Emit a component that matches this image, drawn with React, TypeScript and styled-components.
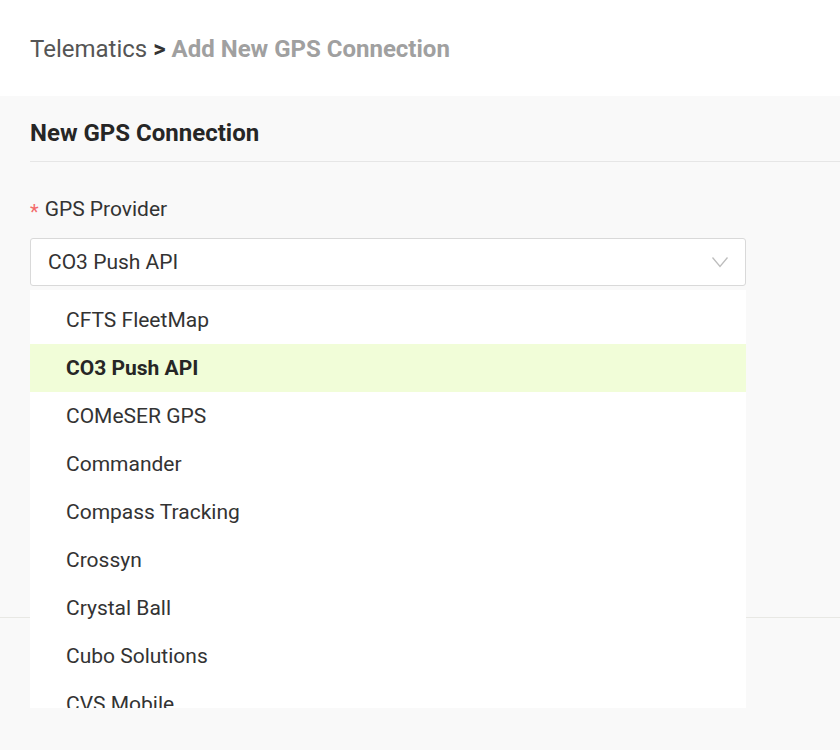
import styled, { createGlobalStyle } from "styled-components";

const providers = [
  "CFTS FleetMap",
  "CO3 Push API",
  "COMeSER GPS",
  "Commander",
  "Compass Tracking",
  "Crossyn",
  "Crystal Ball",
  "Cubo Solutions",
  "CVS Mobile",
];

const selected = "CO3 Push API";

export default function App() {
  return (
    <>
      <GlobalStyle />
      <Page>
        <Header>
          <Crumb>Telematics</Crumb>
          <Separator>&gt;</Separator>
          <CurrentCrumb>Add New GPS Connection</CurrentCrumb>
        </Header>
        <Panel>
          <TitleBar>
            <Title>New GPS Connection</Title>
          </TitleBar>
          <Form>
            <Label>
              <Required>*</Required>GPS Provider
            </Label>
            <SelectWrap>
              <SelectBox>
                <span>{selected}</span>
                <svg width="18" height="12" viewBox="0 0 18 12">
                  <path d="M1.5 1.5 L9 10.5 L16.5 1.5" fill="none" stroke="#bdbdbd" strokeWidth="1.3" />
                </svg>
              </SelectBox>
              <Menu>
                {providers.map((p) => (
                  <Option key={p} active={p === selected}>
                    {p}
                  </Option>
                ))}
              </Menu>
            </SelectWrap>
          </Form>
        </Panel>
      </Page>
    </>
  );
}

const GlobalStyle = createGlobalStyle`
  html, body {
    margin: 0;
    padding: 0;
    background: #f9f9f9;
  }

  body {
    font-family: Roboto, "Liberation Sans", sans-serif;
  }
`;

const Page = styled.div`
  min-height: 750px;
  background: #f9f9f9;
`;

const Header = styled.div`
  height: 96px;
  display: flex;
  align-items: center;
  gap: 6px;
  padding: 2px 0 0 30px;
  box-sizing: border-box;

  font-size: 24px;
  background: #ffffff;
`;

const Crumb = styled.span`
  color: #555555;
`;

const Separator = styled.span`
  font-weight: 700;
  color: #333333;
`;

const CurrentCrumb = styled.span`
  font-weight: 700;
  color: #a0a0a0;
`;

const Panel = styled.div`
  padding-left: 30px;
  background: #f9f9f9;
`;

const TitleBar = styled.div`
  height: 65px;
  display: flex;
  align-items: flex-end;

  border-bottom: 1px solid #e6e6e6;
`;

const Title = styled.h1`
  margin: 0 0 11px;

  font-size: 24px;
  font-weight: 700;
  line-height: 34px;
  color: #262626;
`;

const Form = styled.div`
  height: 456px;
  padding-top: 27px;
  box-sizing: border-box;
  margin-left: -30px;
  padding-left: 30px;

  border-bottom: 1px solid #e8e8e4;
`;

const Label = styled.div`
  display: flex;
  align-items: center;
  margin-bottom: 9px;

  font-size: 21px;
  line-height: 34px;
  color: #333333;
`;

const Required = styled.span`
  margin-right: 6px;
  margin-top: 6px;

  font-size: 20px;
  color: #f36b6b;
`;

const SelectWrap = styled.div`
  position: relative;
  width: 716px;
`;

const SelectBox = styled.div`
  height: 48px;
  box-sizing: border-box;
  display: flex;
  align-items: center;
  justify-content: space-between;
  padding: 0 16px 0 17px;

  font-size: 21px;
  color: #333333;
  background: #ffffff;
  border: 1px solid #d9d9d9;
  border-radius: 3px;
`;

const Menu = styled.div`
  position: absolute;
  top: 52px;
  left: 0;
  width: 716px;
  height: 418px;
  overflow: hidden;
  padding-top: 6px;
  box-sizing: border-box;

  background: #ffffff;
`;

const Option = styled.div<{ active?: boolean }>`
  height: 48px;
  display: flex;
  align-items: center;
  padding-left: 36px;

  font-size: 21px;
  font-weight: ${(p) => (p.active ? 700 : 400)};
  color: ${(p) => (p.active ? "#262626" : "#333333")};
  background: ${(p) => (p.active ? "#f1fdd8" : "#ffffff")};
`;
